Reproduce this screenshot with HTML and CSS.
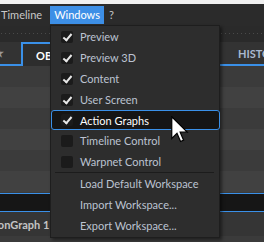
FILE: index.html
```html
<!DOCTYPE html>
<html lang="en">
<head>
    <meta charset="UTF-8">
    <title>Windows menu</title>
    <link rel="stylesheet" href="styles.css">
</head>
<body>
    <div class="topline"></div>
    <div class="menubar">
        <span class="menu-title">Timeline</span>
        <span class="menu-title open">Windows</span>
        <span class="menu-title">?</span>
    </div>
    <div class="dots"></div>
    <div class="tabbar">
        <div class="tab-lead"><span class="star">&#9733;</span></div>
        <div class="tab active">OBJECTS</div>
        <div class="tab history">HISTORY</div>
    </div>
    <div class="list">
        <div class="row"></div>
        <div class="row alt"></div>
        <div class="row"></div>
        <div class="row alt"></div>
        <div class="row"></div>
        <div class="row alt"></div>
        <div class="row selected"></div>
        <div class="row group"><span class="group-name">ActionGraph 1</span></div>
    </div>

    <div class="dropdown">
        <div class="item"><span class="check on"></span>Preview</div>
        <div class="item"><span class="check on"></span>Preview 3D</div>
        <div class="item"><span class="check on"></span>Content</div>
        <div class="item"><span class="check on"></span>User Screen</div>
        <div class="item hover"><span class="check on"></span>Action Graphs</div>
        <div class="item"><span class="check"></span>Timeline Control</div>
        <div class="item"><span class="check"></span>Warpnet Control</div>
        <div class="separator"></div>
        <div class="item plain">Load Default Workspace</div>
        <div class="item plain">Import Workspace...</div>
        <div class="item plain">Export Workspace...</div>
    </div>

    <svg class="cursor" width="18" height="27" viewBox="0 0 12 18">
        <path d="M0.5 0.5 L0.5 15 L4 11.6 L6.4 17 L8.4 16.1 L6.1 10.8 L10.8 10.8 Z" fill="#fff" stroke="#000" stroke-width="0.8" stroke-linejoin="miter"/>
    </svg>
</body>
</html>
```

FILE: styles.css
```css
body {
    margin: 0;
    width: 264px;
    height: 242px;
    overflow: hidden;
    position: relative;
    background-color: #3b3b3b;
    font-family: Lato, 'Noto Sans', sans-serif;
    font-size: 11px;
}

.topline {
    height: 4px;
    background-color: #f0f0f0;
}

.menubar {
    height: 22px;
    display: flex;
    align-items: center;
    background-color: #2b2b2b;
    color: #c8c8c8;
}

.menu-title {
    padding: 0 5px;
    line-height: 18px;
}

.menu-title:first-child {
    padding-left: 1px;
    margin-right: 3px;
}

.menu-title.open {
    background-color: #3d8fe6;
    color: #ffffff;
    padding: 0 4px;
    margin-right: 0;
}

.dots {
    height: 12px;
    background-color: #2a2a2a;
    background-image: linear-gradient(to right, #4a4a4a 1px, transparent 1px);
    background-size: 4px 1px;
    background-repeat: repeat-x;
    background-position: 1px 7px;
}

.tabbar {
    height: 28px;
    display: flex;
    align-items: flex-end;
    background-color: #2a2a2a;
    font-weight: 700;
    white-space: nowrap;
    overflow: hidden;
}

.tab-lead {
    width: 21px;
    height: 22px;
    flex-shrink: 0;
    background-color: #333333;
    border-bottom: 2px solid #3a90e8;
    display: flex;
    align-items: center;
}

.star {
    color: #9a9a9a;
    font-size: 11px;
    margin-left: -6px;
}

.tab {
    height: 24px;
    display: flex;
    align-items: center;
    box-sizing: border-box;
    flex-shrink: 0;
}

.tab.active {
    width: 199px;
    border-top: 2px solid #3a90e8;
    border-left: 2px solid #3a90e8;
    background-color: #2d2d2d;
    color: #ffffff;
    padding-left: 13px;
}

.tab.history {
    width: 44px;
    height: 24px;
    background-color: #333333;
    border-bottom: 2px solid #3a90e8;
    color: #a9b8cf;
    padding-left: 18px;
    overflow: hidden;
}

.row {
    height: 21px;
    background-color: #3b3b3b;
}

.row.alt {
    background-color: #414141;
}

.row.selected {
    height: 17px;
    margin-top: 1px;
    background-color: #161616;
    border-top: 1px solid #3a90e8;
    border-bottom: 1px solid #3a90e8;
}

.row.group {
    height: 24px;
    background-color: #353535;
    display: flex;
    align-items: center;
    color: #c4c4c4;
    font-weight: 700;
    white-space: nowrap;
    overflow: hidden;
}

.group-name {
    margin-left: -22px;
}

.dropdown {
    position: absolute;
    top: 25px;
    left: 50px;
    width: 168px;
    padding: 0 0 1px 0;
    background-color: #2d2d2d;
    border: 1px solid #1e1e1e;
    box-shadow: 2px 2px 3px rgba(0, 0, 0, 0.45);
    color: #bcc3d1;
}

.item {
    height: 21px;
    display: flex;
    align-items: center;
    padding-left: 10px;
    box-sizing: border-box;
}

.item.hover {
    margin: 0 -1px 0 0;
    height: 20px;
    border: 1.5px solid #3a90e8;
    border-radius: 3px;
    background-color: #151515;
    color: #ffffff;
    padding-left: 9px;
}

.item.plain {
    padding-left: 29px;
}

.check {
    width: 12px;
    height: 12px;
    margin-right: 7px;
    border-radius: 2px;
    background-color: #1b1b1b;
    position: relative;
}

.check.on::after {
    content: "";
    position: absolute;
    left: 4px;
    top: 1px;
    width: 3px;
    height: 7px;
    border-right: 2px solid #e8e8e8;
    border-bottom: 2px solid #e8e8e8;
    transform: rotate(40deg);
}

.separator {
    height: 1px;
    margin: 0 5px 0 4px;
    background-color: #1c1c1c;
}

.cursor {
    position: absolute;
    left: 171px;
    top: 116px;
}
```
